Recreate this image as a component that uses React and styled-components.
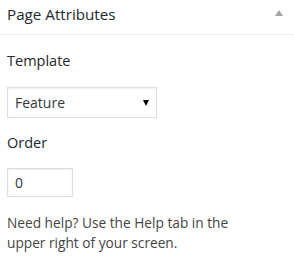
import React from 'react';
import styled, { createGlobalStyle } from 'styled-components';

const GlobalStyle = createGlobalStyle`
  body {
    margin: 0;
    background: #fff;
    font-family: "Open Sans", "Liberation Sans", sans-serif;
    color: #444;
  }
`;

function App() {
  return (
    <>
      <GlobalStyle />
      <Box>
        <Header>
          <Title>Page Attributes</Title>
          <Toggle aria-label="Toggle panel" />
        </Header>
        <Inside>
          <Label>Template</Label>
          <SelectWrap>
            <Select defaultValue="feature">
              <option value="default">Default Template</option>
              <option value="feature">Feature</option>
            </Select>
          </SelectWrap>
          <Label $gap={15}>Order</Label>
          <NumberInput type="text" defaultValue="0" />
          <Help>Need help? Use the Help tab in the upper right of your screen.</Help>
        </Inside>
      </Box>
    </>
  );
}

const Box = styled.div`
  width: 294px;
  height: 266px;
  background: #fff;
`;
const Header = styled.div`
  box-sizing: border-box;
  height: 35px;
  padding: 4px 11px 10px 7px;
  display: flex;
  align-items: center;
  justify-content: space-between;
  border-bottom: 1px solid #eee;
`;
const Title = styled.h2`
  margin: 0;
  font-size: 15.2px;
  line-height: 20px;
  font-weight: 400;
  color: #23282d;
`;
const Toggle = styled.button`
  width: 0;
  height: 0;
  padding: 0;
  border: none;
  background: none;
  border-left: 4px solid transparent;
  border-right: 4px solid transparent;
  border-bottom: 6px solid #a0a5aa;
  margin-top: -2px;
`;
const Inside = styled.div`
  padding: 16px 7px 0;
  display: flex;
  flex-direction: column;
  align-items: flex-start;
`;
const Label = styled.p`
  margin: 0 0 ${(p) => p.$gap || 16}px;
  font-size: 14.5px;
  line-height: 20px;
  color: #23282d;
`;
const SelectWrap = styled.div`
  position: relative;
  margin-bottom: 15px;
  &::after {
    content: '';
    position: absolute;
    right: 8px;
    top: 13px;
    border-left: 3.5px solid transparent;
    border-right: 3.5px solid transparent;
    border-top: 6px solid #000;
    pointer-events: none;
  }
`;
const Select = styled.select`
  appearance: none;
  box-sizing: border-box;
  width: 150px;
  height: 31px;
  margin: 0;
  padding: 0 20px 0 7px;
  border: 1px solid #ddd;
  border-radius: 0;
  box-shadow: inset 0 1px 2px rgba(0, 0, 0, 0.07);
  background: #fff;
  font-family: inherit;
  font-size: 14px;
  color: #32373c;
  outline: none;
`;
const NumberInput = styled.input`
  box-sizing: border-box;
  width: 66px;
  height: 29px;
  margin: 0 0 16px;
  padding: 0 7px;
  border: 1px solid #ddd;
  border-radius: 0;
  box-shadow: inset 0 1px 2px rgba(0, 0, 0, 0.07);
  font-family: inherit;
  font-size: 14px;
  color: #32373c;
  outline: none;
`;
const Help = styled.p`
  margin: 0;
  width: 260px;
  font-size: 13.7px;
  line-height: 20px;
  color: #444;
`;

export default App;
